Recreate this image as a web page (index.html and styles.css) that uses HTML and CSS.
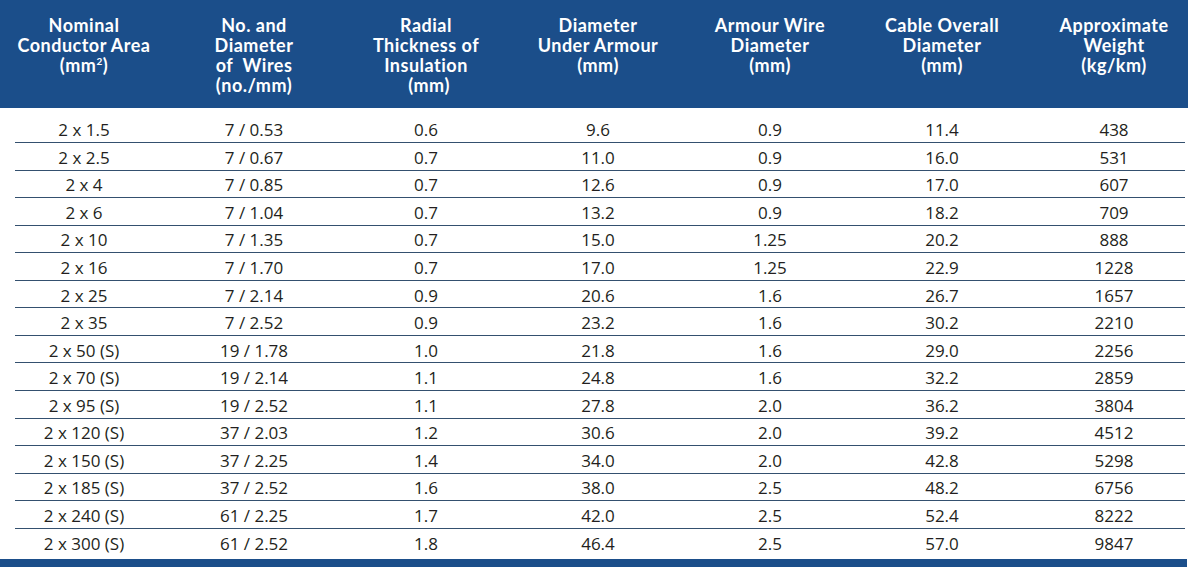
FILE: index.html
```html
<!DOCTYPE html>
<html>
<head>
<meta charset="utf-8">
<link rel="stylesheet" href="styles.css">
</head>
<body>
<div class="sheet">
  <div class="thead">
    <div class="th">Nominal<br>Conductor Area<br>(mm<sup>2</sup>)</div>
    <div class="th">No. and<br>Diameter<br>of&nbsp; Wires<br>(no./mm)</div>
    <div class="th">Radial<br>Thickness of<br>Insulation<br><span class="nudge">(mm)</span></div>
    <div class="th">Diameter<br>Under Armour<br>(mm)</div>
    <div class="th">Armour Wire<br>Diameter<br>(mm)</div>
    <div class="th">Cable Overall<br>Diameter<br>(mm)</div>
    <div class="th">Approximate<br>Weight<br>(kg/km)</div>
  </div>
  <div class="tbody">
    <div class="row"><div>2 x 1.5</div><div>7 / 0.53</div><div>0.6</div><div>9.6</div><div>0.9</div><div>11.4</div><div>438</div></div>
    <div class="row"><div>2 x 2.5</div><div>7 / 0.67</div><div>0.7</div><div>11.0</div><div>0.9</div><div>16.0</div><div>531</div></div>
    <div class="row"><div>2 x 4</div><div>7 / 0.85</div><div>0.7</div><div>12.6</div><div>0.9</div><div>17.0</div><div>607</div></div>
    <div class="row"><div>2 x 6</div><div>7 / 1.04</div><div>0.7</div><div>13.2</div><div>0.9</div><div>18.2</div><div>709</div></div>
    <div class="row"><div>2 x 10</div><div>7 / 1.35</div><div>0.7</div><div>15.0</div><div>1.25</div><div>20.2</div><div>888</div></div>
    <div class="row"><div>2 x 16</div><div>7 / 1.70</div><div>0.7</div><div>17.0</div><div>1.25</div><div>22.9</div><div>1228</div></div>
    <div class="row"><div>2 x 25</div><div>7 / 2.14</div><div>0.9</div><div>20.6</div><div>1.6</div><div>26.7</div><div>1657</div></div>
    <div class="row"><div>2 x 35</div><div>7 / 2.52</div><div>0.9</div><div>23.2</div><div>1.6</div><div>30.2</div><div>2210</div></div>
    <div class="row"><div>2 x 50 (S)</div><div>19 / 1.78</div><div>1.0</div><div>21.8</div><div>1.6</div><div>29.0</div><div>2256</div></div>
    <div class="row"><div>2 x 70 (S)</div><div>19 / 2.14</div><div>1.1</div><div>24.8</div><div>1.6</div><div>32.2</div><div>2859</div></div>
    <div class="row"><div>2 x 95 (S)</div><div>19 / 2.52</div><div>1.1</div><div>27.8</div><div>2.0</div><div>36.2</div><div>3804</div></div>
    <div class="row"><div>2 x 120 (S)</div><div>37 / 2.03</div><div>1.2</div><div>30.6</div><div>2.0</div><div>39.2</div><div>4512</div></div>
    <div class="row"><div>2 x 150 (S)</div><div>37 / 2.25</div><div>1.4</div><div>34.0</div><div>2.0</div><div>42.8</div><div>5298</div></div>
    <div class="row"><div>2 x 185 (S)</div><div>37 / 2.52</div><div>1.6</div><div>38.0</div><div>2.5</div><div>48.2</div><div>6756</div></div>
    <div class="row"><div>2 x 240 (S)</div><div>61 / 2.25</div><div>1.7</div><div>42.0</div><div>2.5</div><div>52.4</div><div>8222</div></div>
    <div class="row last"><div>2 x 300 (S)</div><div>61 / 2.52</div><div>1.8</div><div>46.4</div><div>2.5</div><div>57.0</div><div>9847</div></div>
  </div>
  <div class="bar"></div>
</div>
</body>
</html>
```
FILE: styles.css
```css
html, body {
  margin: 0;
  padding: 0;
  background: #ffffff;
  overflow: hidden;
}
.sheet {
  width: 1188px;
  height: 570px;
  overflow: hidden;
  font-family: "Open Sans", "Liberation Sans", sans-serif;
}
.thead, .row {
  display: grid;
  grid-template-columns: 168px repeat(6, 172px);
}
.thead {
  height: 108px;
  background: #1b4e8a;
  color: #ffffff;
  font-family: Lato, "Open Sans", sans-serif;
  font-weight: 700;
  font-size: 18px;
  letter-spacing: 0.5px;
  line-height: 20px;
  box-sizing: border-box;
  padding-top: 15px;
}
.th {
  text-align: center;
}
.th sup {
  font-size: 10px;
  line-height: 0;
  vertical-align: 7px;
}
.nudge {
  padding-left: 6px;
}
.tbody {
  padding-top: 7.4px;
}
.row {
  height: 27.57px;
  align-items: center;
  text-align: center;
  font-size: 17px;
  color: #231f20;
  box-sizing: border-box;
  padding-top: 1px;
  background: linear-gradient(#34506f, #34506f) no-repeat 15px 100% / 1170px 1px;
}
.row.last {
  background: none;
}
.bar {
  margin-top: 3px;
  width: 1187px;
  height: 8px;
  background: #1b4e8a;
}
```
